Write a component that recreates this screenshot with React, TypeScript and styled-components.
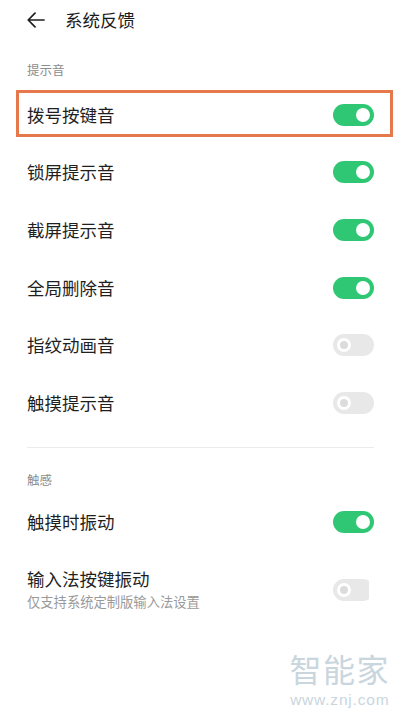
import React from "react";
import styled, { createGlobalStyle } from "styled-components";

const GlobalStyle = createGlobalStyle`
  html, body {
    margin: 0;
    padding: 0;
    background: #ffffff;
  }
  body {
    font-family: "Noto Sans CJK SC", "Noto Sans", sans-serif;
    color: #1f1f1f;
  }
`;

const Page = styled.div`
  position: relative;
  width: 400px;
  height: 719px;
  overflow: hidden;
  background: #ffffff;
`;

const Header = styled.div`
  height: 40px;
  display: flex;
  align-items: center;
  padding-left: 27px;
  gap: 20px;
`;

const BackButton = styled.div`
  width: 18px;
  height: 16px;
  display: flex;
  align-items: center;
  justify-content: center;
`;

const Title = styled.div`
  font-size: 17.5px;
  line-height: 24px;
  color: #1a1a1a;
`;

const Content = styled.div`
  padding: 0 26px 0 27px;
`;

const SectionLabel = styled.div<{ $top: number; $bottom: number }>`
  margin-top: ${({ $top }) => $top}px;
  margin-bottom: ${({ $bottom }) => $bottom}px;
  font-size: 12.5px;
  line-height: 18px;
  color: #8c8c8c;
`;

const Row = styled.div<{ $highlight?: boolean }>`
  position: relative;
  height: 57.6px;
  display: flex;
  align-items: center;
  justify-content: space-between;

  ${({ $highlight }) =>
    $highlight &&
    `
    &::after {
      content: "";
      position: absolute;
      left: -11px;
      right: -19px;
      top: 4px;
      height: 47px;
      box-sizing: border-box;
      border: 3px solid #e5794c;
      pointer-events: none;
    }
  `}
`;

const TallRow = styled.div`
  display: flex;
  align-items: center;
  justify-content: space-between;
  padding-top: 16px;
`;

const RowLabel = styled.div`
  font-size: 17.5px;
  line-height: 24px;
  color: #1f1f1f;
`;

const RowTexts = styled.div`
  display: flex;
  flex-direction: column;
`;

const RowHint = styled.div`
  font-size: 13.3px;
  line-height: 20px;
  margin-top: 1px;
  color: #9a9a9a;
`;

const Divider = styled.div`
  margin-top: 15px;
  height: 1px;
  background: #ebebeb;
`;

const Track = styled.div<{ $on: boolean }>`
  flex-shrink: 0;
  width: 41px;
  height: 22px;
  border-radius: 11px;
  background: ${({ $on }) => ($on ? "#2fc774" : "#e8e8e8")};
  display: flex;
  align-items: center;
  justify-content: ${({ $on }) => ($on ? "flex-end" : "flex-start")};
  padding: 0 4px;
  box-sizing: border-box;
`;

const Knob = styled.div<{ $on: boolean }>`
  width: 14px;
  height: 14px;
  border-radius: 50%;
  box-sizing: border-box;
  background: ${({ $on }) => ($on ? "#ffffff" : "#dcdcdc")};
  border: ${({ $on }) => ($on ? "none" : "3px solid #ffffff")};
`;

const ClipBox = styled.div`
  width: 36px;
  overflow: hidden;
  flex-shrink: 0;
  margin-right: 5px;
`;

const Watermark = styled.div`
  position: absolute;
  right: 10px;
  bottom: 11px;
  display: flex;
  flex-direction: column;
  align-items: center;
  gap: 8px;
  color: #c9d6de;
`;

const WatermarkName = styled.div`
  font-size: 32px;
  line-height: 32px;
  letter-spacing: 1.5px;
`;

const WatermarkUrl = styled.div`
  font-family: "Liberation Sans", Arial, sans-serif;
  font-size: 15.5px;
  line-height: 16px;
  letter-spacing: 0.8px;
`;

const Toggle = ({ on }: { on: boolean }) => (
  <Track $on={on}>
    <Knob $on={on} />
  </Track>
);

const BackArrow = () => (
  <svg width="18" height="16" viewBox="0 0 18 16" fill="none">
    <path
      d="M17 8H1.5M8 1.2L1.2 8L8 14.8"
      stroke="#1f1f1f"
      strokeWidth="1.7"
      strokeLinecap="round"
      strokeLinejoin="round"
    />
  </svg>
);

const soundRows = [
  { label: "拨号按键音", on: true, highlight: true },
  { label: "锁屏提示音", on: true },
  { label: "截屏提示音", on: true },
  { label: "全局删除音", on: true },
  { label: "指纹动画音", on: false },
  { label: "触摸提示音", on: false },
];

export default function App() {
  return (
    <>
      <GlobalStyle />
      <Page>
        <Header>
          <BackButton>
            <BackArrow />
          </BackButton>
          <Title>系统反馈</Title>
        </Header>
        <Content>
          <SectionLabel $top={21} $bottom={7}>
            提示音
          </SectionLabel>
          {soundRows.map((row) => (
            <Row key={row.label} $highlight={row.highlight}>
              <RowLabel>{row.label}</RowLabel>
              <Toggle on={row.on} />
            </Row>
          ))}
          <Divider />
          <SectionLabel $top={23} $bottom={5}>
            触感
          </SectionLabel>
          <Row>
            <RowLabel>触摸时振动</RowLabel>
            <Toggle on={true} />
          </Row>
          <TallRow>
            <RowTexts>
              <RowLabel>输入法按键振动</RowLabel>
              <RowHint>仅支持系统定制版输入法设置</RowHint>
            </RowTexts>
            <ClipBox>
              <Toggle on={false} />
            </ClipBox>
          </TallRow>
        </Content>
        <Watermark>
          <WatermarkName>智能家</WatermarkName>
          <WatermarkUrl>www.znj.com</WatermarkUrl>
        </Watermark>
      </Page>
    </>
  );
}
